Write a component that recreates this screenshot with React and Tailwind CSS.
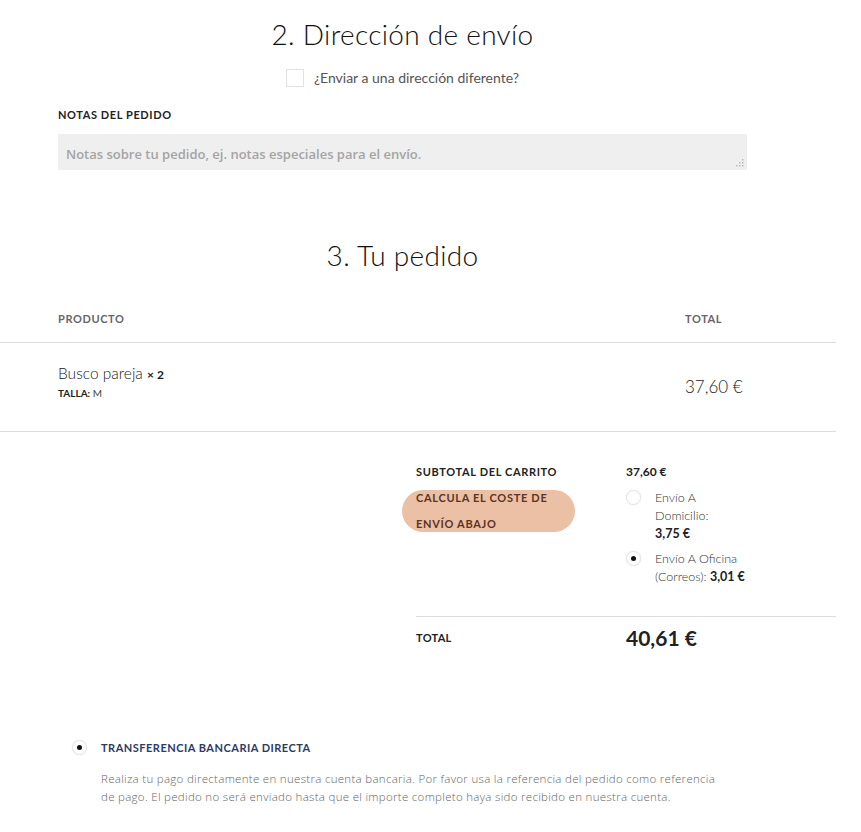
const Radio = ({ checked }) => (
  <span className="flex h-[15px] w-[15px] shrink-0 items-center justify-center rounded-full border border-[#e4e4e4] bg-white shadow-[0_0_2px_rgba(0,0,0,0.08)]">
    {checked && <span className="h-[5px] w-[5px] rounded-full bg-[#111]" />}
  </span>
);

const App = () => {
  return (
    <div className="min-h-[832px] w-[861px] bg-white font-['Lato',sans-serif] text-[#222]">
      <div className="w-[689px] ml-[58px]">
        <h3 className="pt-[15px] text-center text-[28px] font-light leading-[38px] tracking-[0.3px] text-[#111]">
          2. Dirección de envío
        </h3>
        <label className="mt-[16px] flex items-center justify-center gap-[10px]">
          <span className="h-[18px] w-[18px] border border-[#e2e2e2] bg-white" />
          <span className="text-[14px] leading-[18px] text-[#555]">
            ¿Enviar a una dirección diferente?
          </span>
        </label>
        <div className="mt-[20px] text-[11px] font-bold leading-[16px] tracking-[0.6px] text-[#222]">
          NOTAS DEL PEDIDO
        </div>
        <div className="relative mt-[11px] h-[36px] bg-[#efefef] px-[8px] pt-[7px]">
          <span className="font-['Open_Sans',sans-serif] text-[13px] font-semibold text-[#a4a4a4]">
            Notas sobre tu pedido, ej. notas especiales para el envío.
          </span>
          <svg className="absolute bottom-[3px] right-[3px]" width="9" height="9" viewBox="0 0 9 9">
            <rect x="7" y="1" width="1.5" height="1.5" fill="#bbb" />
            <rect x="4" y="4" width="1.5" height="1.5" fill="#bbb" />
            <rect x="7" y="4" width="1.5" height="1.5" fill="#bbb" />
            <rect x="1" y="7" width="1.5" height="1.5" fill="#bbb" />
            <rect x="4" y="7" width="1.5" height="1.5" fill="#bbb" />
            <rect x="7" y="7" width="1.5" height="1.5" fill="#bbb" />
          </svg>
        </div>
        <h3 className="mt-[66px] text-center text-[28px] font-light leading-[38px] tracking-[0.3px] text-[#111]">
          3. Tu pedido
        </h3>
      </div>

      <div className="w-[836px]">
        <div className="mt-[37px] flex h-[32px] items-start border-b border-[#dcdcdc] text-[11px] font-bold tracking-[0.6px] text-[#666]">
          <div className="w-[685px] pl-[58px]">PRODUCTO</div>
          <div>TOTAL</div>
        </div>
        <div className="flex h-[89px] items-center border-b border-[#dcdcdc]">
          <div className="w-[685px] pl-[58px] pb-[11px]">
            <div className="text-[15.5px] font-light leading-[20px] text-[#222]">
              Busco pareja <strong className="text-[12px] font-bold">× 2</strong>
            </div>
            <div className="text-[10px] leading-[16px] text-[#444]">
              <strong className="font-bold text-[#222]">TALLA:</strong> M
            </div>
          </div>
          <div className="text-[17px] font-light text-[#222]">37,60 €</div>
        </div>

        <div className="ml-[416px] mt-[32px] flex">
          <div className="w-[210px]">
            <div className="text-[11px] font-bold leading-[16px] tracking-[0.65px] text-[#222]">SUBTOTAL DEL CARRITO</div>
            <div className="-ml-[14px] mt-[10px] flow-root h-[42px] w-[173px] rounded-full bg-[#ecc0a4] pl-[14px]">
              <div className="-mt-[5px] text-[11px] font-bold leading-[26px] tracking-[0.7px] text-[#5a3424]">
                CALCULA EL COSTE DE
                <br />
                ENVÍO ABAJO
              </div>
            </div>
          </div>
          <div>
            <div className="text-[12px] font-bold leading-[16px] text-[#222]">37,60 €</div>
            <div className="mt-[9px] flex gap-[14px]">
              <div className="pt-[1px]"><Radio /></div>
              <div className="text-[12.5px] font-light leading-[18px] text-[#333]">
                Envío A
                <br />
                Domicilio:
                <br />
                <strong className="font-bold text-[#222]">3,75 €</strong>
              </div>
            </div>
            <div className="mt-[7px] flex gap-[14px]">
              <div className="pt-[1px]"><Radio checked /></div>
              <div className="text-[12.5px] font-light leading-[18px] text-[#333]">
                Envío A Oficina
                <br />
                (Correos): <strong className="font-bold text-[#222]">3,01 €</strong>
              </div>
            </div>
          </div>
        </div>

        <div className="ml-[416px] mt-[30px] flex items-center border-t border-[#dcdcdc] pt-[5px]">
          <div className="w-[210px] text-[11px] font-bold tracking-[0.3px] text-[#222]">TOTAL</div>
          <div className="text-[21px] font-bold text-[#222]">40,61 €</div>
        </div>
      </div>

      <div className="ml-[72px] mt-[86px] flex items-center gap-[14px]">
        <Radio checked />
        <div className="text-[11px] font-bold tracking-[0.5px] text-[#2b3a67]">TRANSFERENCIA BANCARIA DIRECTA</div>
      </div>
      <p className="ml-[101px] mt-[14px] w-[628px] font-['Open_Sans',sans-serif] text-[11.5px] font-light leading-[18px] tracking-[0.3px] text-[#666]">
        Realiza tu pago directamente en nuestra cuenta bancaria. Por favor usa la referencia del pedido como referencia de pago. El pedido no será enviado hasta que el importe completo haya sido recibido en nuestra cuenta.
      </p>
    </div>
  );
};

export default App;
